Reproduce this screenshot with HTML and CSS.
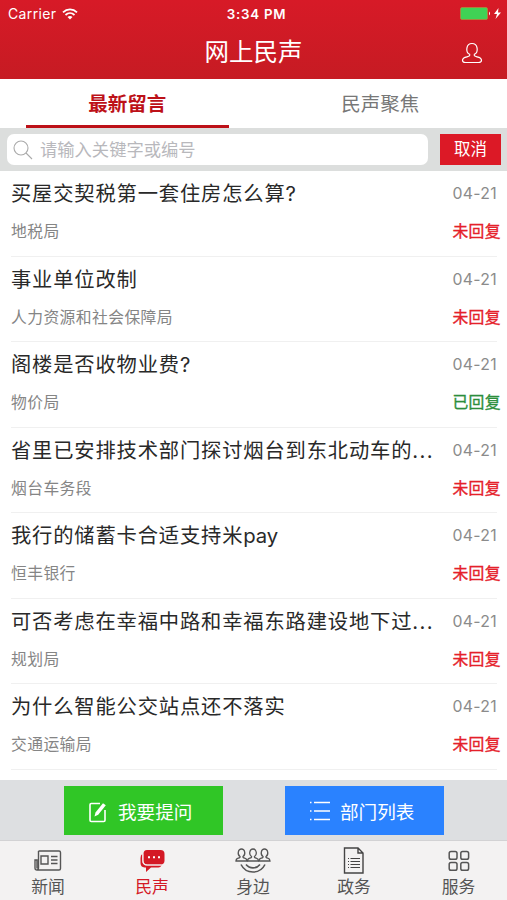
FILE: index.html
```html
<!DOCTYPE html>
<html lang="zh-CN">
<head>
<meta charset="utf-8">
<meta name="viewport" content="width=device-width, initial-scale=1">
<title>网上民声</title>
<link rel="stylesheet" href="styles.css">
</head>
<body>
<div class="app">
  <header class="header">
    <div class="status">
      <div class="carrier"><span>Carrier</span>
        <svg width="16" height="12" viewBox="0 0 16 12" fill="none" stroke="#fff" stroke-width="1.8"><path d="M1 4.3C5 .4 11 .4 15 4.3M3.5 7C6.2 4.5 9.8 4.5 12.500 7"/><path d="M8 11.500L5.500 9Q8 6.900 10.500 9Z" fill="#fff" stroke="none"/></svg>
      </div>
      <div class="clock">3:34 PM</div>
      <div class="battery">
        <svg width="42" height="13" viewBox="0 0 42 13"><rect x=".5" y=".5" width="27" height="12" rx="1.500" fill="#40d255" stroke="#b98a3c" stroke-width=".7"/><path d="M29 4.500q2 2 0 4z" fill="#fff"/><path d="M38.500 1L34 7h3l-1.500 5L41 5.500h-3z" fill="#fff"/></svg>
      </div>
    </div>
    <div class="navbar">
      <h1>网上民声</h1>
      <svg class="user" width="22" height="22" viewBox="0 0 22 22" fill="none" stroke="#fff" stroke-width="1.200"><path d="M8.600 12.300C4.200 10 5 1.500 11 1.500s6.800 8.500 2.400 10.800c-.6 1.500.2 2 2.600 2.500 3.200.6 4.500 1.800 4.500 3.500 0 1.500-1 2.200-3 2.200h-13c-2 0-3-.7-3-2.200 0-1.700 1.300-2.900 4.500-3.500 2.400-.5 3.200-1 2.600-2.500z"/></svg>
    </div>
  </header>
  <nav class="tabs">
    <div class="tab active"><span>最新留言</span></div>
    <div class="tab"><span>民声聚焦</span></div>
  </nav>
  <div class="search">
    <div class="field">
      <svg width="20" height="20" viewBox="0 0 20 20" fill="none" stroke="#aaa" stroke-width="1.100"><circle cx="8" cy="8" r="7"/><path d="M13 13l6 6"/></svg>
      <span>请输入关键字或编号</span>
    </div>
    <div class="cancel">取消</div>
  </div>
  <main class="list">
    <article class="row"><h2>买屋交契税第一套住房怎么算?</h2><time>04-21</time><p>地税局</p><b>未回复</b></article>
    <article class="row"><h2>事业单位改制</h2><time>04-21</time><p>人力资源和社会保障局</p><b>未回复</b></article>
    <article class="row"><h2>阁楼是否收物业费?</h2><time>04-21</time><p>物价局</p><b class="done">已回复</b></article>
    <article class="row"><h2>省里已安排技术部门探讨烟台到东北动车的<i>...</i></h2><time>04-21</time><p>烟台车务段</p><b>未回复</b></article>
    <article class="row"><h2>我行的储蓄卡合适支持米<span class="latin">pay</span></h2><time>04-21</time><p>恒丰银行</p><b>未回复</b></article>
    <article class="row"><h2>可否考虑在幸福中路和幸福东路建设地下过<i>...</i></h2><time>04-21</time><p>规划局</p><b>未回复</b></article>
    <article class="row"><h2>为什么智能公交站点还不落实</h2><time>04-21</time><p>交通运输局</p><b>未回复</b></article>
  </main>
  <div class="actions">
    <div class="action ask">
      <svg width="18" height="21" viewBox="0 0 18 21" fill="none" stroke="#fff" stroke-width="1.600"><path d="M11 1.500H2.200Q1 1.500 1 2.700v15.600q0 1.200 1.200 1.200h12.600q1.200 0 1.200-1.200V8"/><path d="M5.500 14.500l1-4L14 1.200l2.800 2L9.200 12.700z" fill="#fff" stroke="none"/></svg>
      <span>我要提问</span>
    </div>
    <div class="action dept">
      <svg width="20" height="20" viewBox="0 0 20 20" stroke="#fff" stroke-width="1.600"><path d="M0 1.500h1.500M4 1.500h16M0 10h1.500M4 10h16M0 18.500h1.500M4 18.500h16"/></svg>
      <span>部门列表</span>
    </div>
  </div>
  <footer class="tabbar">
    <div class="item news">
      <svg width="28" height="26" viewBox="0 0 28 26" fill="none" stroke="#555" stroke-width="1.400"><path d="M4.500 3H25q1.500 0 1.500 1.500v16Q26.500 22 25 22H3Q1 22 1 20v-8h2v8.500M4.500 3v16.500Q4.500 22 3 22M7 8h7v8H7zM17 8.500h6.500M17 12h6.500M17 15.500h6.500"/></svg>
      <span>新闻</span>
    </div>
    <div class="item voice">
      <svg width="28" height="26" viewBox="0 0 28 26"><path d="M9 2h13.500q4 0 4 4v6.500q0 4-4 4H9.500q-4 0-4-4V6q0-4 3.500-4z" fill="#d41925"/><path d="M4.300 6Q2.500 7 2.500 10v5q0 4 4 4.500H8V24l5-4.500h7.500q2 0 3-2H9q-4.700 0-4.700-5z" fill="#d41925"/><path d="M4.800 6v6.500q0 4.500 4.400 4.500h14" fill="none" stroke="#f4f2f2" stroke-width=".9"/><path d="M10 8.300h2v2h-2zM15 8.300h2v2h-2zM20 8.300h2v2h-2z" fill="#fff"/></svg>
      <span>民声</span>
    </div>
    <div class="item near">
      <svg width="36" height="26" viewBox="0 0 36 26" fill="none" stroke="#555" stroke-width="1.300"><g id="person"><path d="M5 8.500C2 6.500 3 1 6.500 1S11 6.500 8 8.500c-.3 1 .3 1.300 1.700 1.700 1.500.4 2.300 1 2.300 2.800H1c0-1.800.8-2.400 2.300-2.800C4.700 9.800 5.300 9.500 5 8.500z"/></g><use href="#person" x="11.500"/><use href="#person" x="23"/><path d="M6 16.500c5 10 19 10 24 0M11 16.500c3.500 4.500 10.500 4.500 14 0" stroke-width="1.600"/></svg>
      <span>身边</span>
    </div>
    <div class="item gov">
      <svg width="22" height="28" viewBox="0 0 22 28" fill="none" stroke="#444" stroke-width="1.400"><path d="M1.500 1H15l5 5v20H1.500zM15 1v5h5"/><path d="M5 11.500h1M7.500 11.500H17M5 14.500h1M7.500 14.500H17M5 17.500h1M7.500 17.500H17M5 20.500h1M7.500 20.500H17" stroke-width="1.200"/></svg>
      <span>政务</span>
    </div>
    <div class="item serve">
      <svg width="22" height="22" viewBox="0 0 22 22" fill="none" stroke="#555" stroke-width="1.500"><rect x="1.200" y="1.500" width="7.800" height="7.800" rx="1.800"/><rect x="12.800" y="1.500" width="7.800" height="7.800" rx="1.800"/><rect x="1.200" y="12.500" width="7.800" height="7.800" rx="1.800"/><rect x="12.800" y="12.500" width="7.800" height="7.800" rx="1.800"/></svg>
      <span>服务</span>
    </div>
  </footer>
</div>
</body>
</html>
```
FILE: styles.css
```css
* { box-sizing: border-box; margin: 0; padding: 0; }
body { font-family: Inter, "Noto Sans CJK SC", sans-serif; background: #fff; }
svg { display: block; flex: none; }
.app { width: 507px; height: 900px; display: flex; flex-direction: column; overflow: hidden; white-space: nowrap; }
.header { height: 79px; flex: none; background: linear-gradient(#d71a27, #c61b23); color: #fff; }
.status { height: 27px; display: grid; grid-template-columns: 1fr auto 1fr; align-items: center; padding: 0 5px 0 8px; font-size: 14px; }
.carrier { display: flex; align-items: center; gap: 6px; letter-spacing: .35px; }
.clock { font-size: 13.300px; font-weight: 600; letter-spacing: .75px; margin-left: 3px; }
.battery { justify-self: end; }
.navbar { height: 52px; display: grid; grid-template-columns: 1fr auto 1fr; align-items: center; padding-right: 24px; }
.navbar h1 { grid-column: 2; font-size: 24.5px; font-weight: 400; line-height: 36px; margin: -3px 0 0 24px; }
.user { justify-self: end; }
.tabs { height: 49px; flex: none; display: grid; grid-template-columns: 1fr 1fr; grid-template-rows: 49px; font-size: 19.5px; color: #777; }
.tab { height: 49px; text-align: center; line-height: 50px; }
.active { color: #bd1118; font-weight: 700; margin: 0 25px 0 26px; border-bottom: 3px solid #bd1118; }
.search { height: 43px; flex: none; background: #dcdedd; display: flex; align-items: center; gap: 12px; padding: 0 6px 0 7px; }
.field { width: 421px; height: 31px; border-radius: 7px; background: #fff; display: flex; align-items: center; gap: 7px; padding-left: 6px; font-size: 17.3px; color: #b8b8bc; line-height: 30px; }
.cancel { width: 61px; height: 31px; background: #dc1926; color: #fff; font-size: 16.500px; line-height: 31px; text-align: center; }
.list { height: 609px; flex: none; }
.row { height: 85.5px; margin: 0 10px 0 11px; border-bottom: 1px solid #f0f0f0; display: grid; grid-template-columns: 1fr auto; grid-template-rows: 45px 31px; }
.row h2 { font-size: 20.3px; letter-spacing: .84px; font-weight: 400; color: #292929; line-height: 46px; }
.row h2 i { font-style: normal; letter-spacing: 1.4px; }
.row h2 .latin { letter-spacing: -.2px; }
.row time { font-size: 15.800px; letter-spacing: .3px; color: #8b8b8b; line-height: 45px; text-align: right; }
.row p { font-size: 15.800px; letter-spacing: .4px; color: #858585; line-height: 31px; }
.row b { font-size: 15.800px; letter-spacing: .4px; font-weight: 400; -webkit-text-stroke: .35px currentColor; color: #e5202a; line-height: 31px; text-align: right; margin-right: -4px; }
.row b.done { color: #2c8e3c; }
.actions { height: 60px; flex: none; background: #dddfe1; padding: 6px 63px 5px 64px; display: flex; justify-content: space-between; }
.action { width: 159px; height: 49px; color: #fff; font-size: 18.6px; display: flex; align-items: center; }
.action span { margin-top: -1px; }
.ask { background: #30c626; padding-left: 25px; gap: 11px; }
.ask svg { margin-top: 4px; }
.dept { background: #2a82ff; padding-left: 25px; gap: 10px; }
.tabbar { height: 60px; flex: none; border-top: 1px solid #d2d2d4; background: #f3f2f2; display: grid; grid-template-columns: 96px 112px 90px 112px 97px; color: #555; font-size: 16.800px; }
.item { display: grid; grid-template-rows: 34px 24px; justify-items: center; align-items: center; line-height: 24px; }
.item svg { margin-top: 6px; }
.item span { margin-top: -1px; }
.item.voice { color: #d41925; }
```
